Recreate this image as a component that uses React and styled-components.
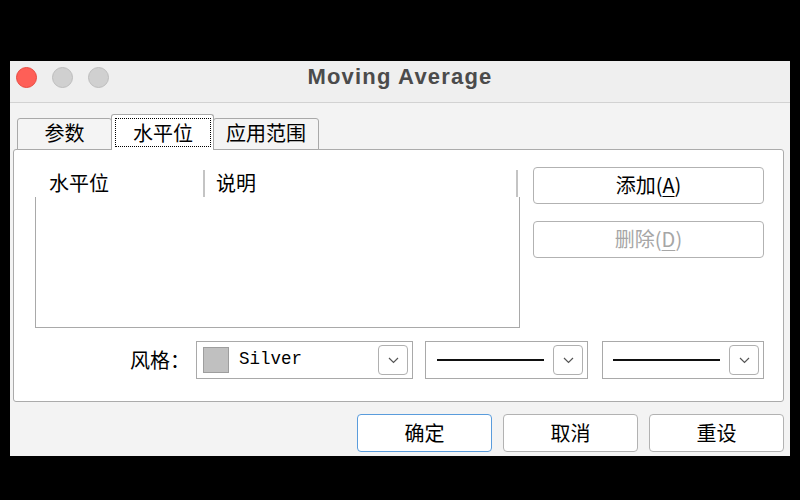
import styled, { createGlobalStyle } from "styled-components";

const GlobalStyle = createGlobalStyle`
    html, body {
        margin: 0;
        background: #000;
    }
    * { box-sizing: border-box; }
`

const cjk = `"Noto Sans CJK SC", "Noto Sans", sans-serif`;

const Page = styled.div`
    width: 800px;
    height: 500px;
    padding: 61px 0 0 10px;
`

const Window = styled.div`
    width: 780px;
    height: 395px;
    background: #f3f3f3;
    display: flex;
    flex-direction: column;
    font-family: ${cjk};
    color: #000;
`

const TitleBar = styled.div`
    height: 42px;
    flex: none;
    display: grid;
    grid-template-columns: 1fr auto 1fr;
    align-items: start;
    padding-top: 6px;
    background: #efefef;
    border-bottom: 1px solid #d2d2d2;
`

const Lights = styled.div`
    display: flex;
    gap: 15px;
    padding-left: 6px;
`

const Light = styled.span`
    width: 21px;
    height: 21px;
    border-radius: 50%;
    background: ${p => p.color};
    border: 1px solid ${p => p.edge};
`

const Title = styled.h1`
    margin: -3px 0 0;
    font: 700 22px/26px "Liberation Sans", Arial, sans-serif;
    letter-spacing: 1.2px;
    color: #4b4b4b;
`

const Body = styled.div`
    flex: 1;
    display: flex;
    flex-direction: column;
    padding: 11px 6px 0 3px;
`

const TabRow = styled.div`
    display: flex;
    align-items: flex-end;
    height: 36px;
    margin-bottom: -1px;
    padding-left: 4px;
    position: relative;
    z-index: 1;
`

const Tab = styled.div`
    width: ${p => p.w}px;
    height: ${p => (p.active ? 36 : 32)}px;
    margin-left: ${p => (p.first ? 0 : -1)}px;
    display: flex;
    padding: ${p => (p.active ? "3px 2px 3px 3px" : "0 0 3px")};
    background: ${p => (p.active ? "#fff" : "#f4f4f4")};
    border: 1px solid #a9a9a9;
    border-bottom: ${p => (p.active ? "none" : "1px solid #a9a9a9")};
    border-radius: 3px 3px 0 0;
    position: relative;
    z-index: ${p => (p.active ? 2 : 1)};
    font-size: 20px;
    line-height: 1;
`

const TabLabel = styled.span`
    flex: 1;
    display: flex;
    align-items: center;
    justify-content: center;
    border: 1px dotted ${p => (p.focus ? "#000" : "transparent")};
`

const Panel = styled.div`
    width: 771px;
    height: 253px;
    display: flex;
    flex-direction: column;
    padding: 20px 19px 0 21px;
    background: #fff;
    border: 1px solid #ababab;
    border-radius: 3px;
`

const TopSection = styled.div`
    display: flex;
    gap: 13px;
    height: 158px;
`

const List = styled.div`
    width: 485px;
    display: flex;
    flex-direction: column;
`

const ListHead = styled.div`
    height: 27px;
    display: flex;
    align-items: stretch;
`

const HeadCell = styled.div`
    width: ${p => p.w}px;
    display: flex;
    align-items: center;
    padding-left: ${p => p.pad}px;
    padding-bottom: 2px;
    font-size: 20px;
    border-right: ${p => (p.sep ? "2px solid #c4c4c4" : "none")};
`

const ListBody = styled.div`
    flex: 1;
    border: 1px solid #a9a9a9;
    border-top: none;
`

const SideButtons = styled.div`
    width: 231px;
    margin-top: -3px;
    display: flex;
    flex-direction: column;
    gap: 17px;
`

const Button = styled.button.attrs({ type: "button" })`
    width: ${p => p.w || 231}px;
    height: ${p => p.h || 37}px;
    padding: 0 0 2px;
    background: #fff;
    border: 1px solid ${p => (p.focused ? "#5a9cdc" : "#b2b2b2")};
    border-radius: 4px;
    font-family: ${cjk};
    font-size: 20px;
    color: ${p => (p.disabled ? "#a6a6a6" : "#000")};
    u { text-decoration-thickness: 1px; text-underline-offset: 3px; }
`

const StyleRow = styled.div`
    display: flex;
    align-items: center;
    justify-content: flex-end;
    margin-top: 13px;
    height: 38px;
`

const Label = styled.span`
    font-size: 20px;
    margin-right: 6px;
    padding-bottom: 2px;
`

const Combo = styled.div`
    width: ${p => p.w}px;
    height: 38px;
    margin-left: ${p => p.gap || 0}px;
    display: flex;
    align-items: center;
    padding: 0 4px 0 ${p => p.pad}px;
    background: #fff;
    border: 1px solid #a9a9a9;
`

const Swatch = styled.span`
    width: 26px;
    height: 26px;
    flex: none;
    background: ${p => p.color};
    border: 1px solid #9e9e9e;
    margin-right: 10px;
`

const ComboText = styled.span`
    flex: 1;
    font: 17.5px/1 "Liberation Mono", "DejaVu Sans Mono", monospace;
    padding-bottom: 1px;
`

const LineSample = styled.span`
    width: 107px;
    height: 2px;
    background: #111;
    margin-right: auto;
`

const Arrow = styled.span`
    width: 30px;
    height: 30px;
    flex: none;
    display: flex;
    align-items: center;
    justify-content: center;
    border: 1px solid #b0b0b0;
    border-radius: 4px;
    background: #fff;
`

const Footer = styled.div`
    display: flex;
    justify-content: flex-end;
    gap: 11px;
    margin-top: 12px;
`

function Chevron() {
    return (
        <svg width="11" height="7" viewBox="0 0 11 7">
            <polyline points="1,1 5.5,5.5 10,1" fill="none" stroke="#555" strokeWidth="1.2" />
        </svg>
    );
}

function App() {
    const tabs = [
        { label: "参数", w: 95 },
        { label: "水平位", w: 103, active: true },
        { label: "应用范围", w: 106 },
    ];

    return (
        <>
            <GlobalStyle />
            <Page>
                <Window>
                    <TitleBar>
                        <Lights>
                            <Light color="#fe5f57" edge="#e9493f" />
                            <Light color="#d0d0d0" edge="#bdbdbd" />
                            <Light color="#d0d0d0" edge="#bdbdbd" />
                        </Lights>
                        <Title>Moving Average</Title>
                        <span />
                    </TitleBar>
                    <Body>
                        <TabRow>
                            {tabs.map((t, i) => (
                                <Tab key={t.label} w={t.w} active={t.active} first={i === 0}>
                                    <TabLabel focus={t.active}>{t.label}</TabLabel>
                                </Tab>
                            ))}
                        </TabRow>
                        <Panel>
                            <TopSection>
                                <List>
                                    <ListHead>
                                        <HeadCell w={170} pad={14} sep>水平位</HeadCell>
                                        <HeadCell w={313} pad={11} sep>说明</HeadCell>
                                    </ListHead>
                                    <ListBody />
                                </List>
                                <SideButtons>
                                    <Button>添加(<u>A</u>)</Button>
                                    <Button disabled>删除(<u>D</u>)</Button>
                                </SideButtons>
                            </TopSection>
                            <StyleRow>
                                <Label>风格：</Label>
                                <Combo w={217} pad={6}>
                                    <Swatch color="#c0c0c0" />
                                    <ComboText>Silver</ComboText>
                                    <Arrow><Chevron /></Arrow>
                                </Combo>
                                <Combo w={163} pad={11} gap={12}>
                                    <LineSample />
                                    <Arrow><Chevron /></Arrow>
                                </Combo>
                                <Combo w={162} pad={10} gap={14}>
                                    <LineSample />
                                    <Arrow><Chevron /></Arrow>
                                </Combo>
                            </StyleRow>
                        </Panel>
                        <Footer>
                            <Button w={135} h={38} focused>确定</Button>
                            <Button w={135} h={38}>取消</Button>
                            <Button w={135} h={38}>重设</Button>
                        </Footer>
                    </Body>
                </Window>
            </Page>
        </>
    );
}

export default App;
